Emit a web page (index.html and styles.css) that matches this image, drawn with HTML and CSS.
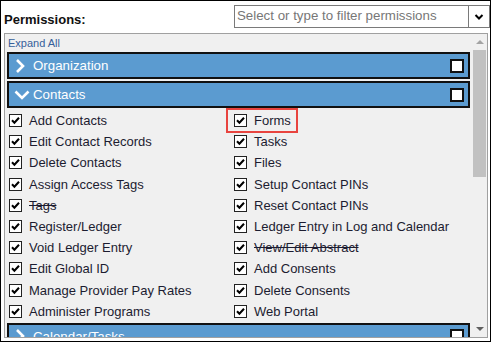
FILE: index.html
```html
<!DOCTYPE html>
<html lang="en">
  <head>
    <meta charset="UTF-8" />
    <title>Permissions</title>
    <link rel="stylesheet" href="styles.css">
  </head>
  <body>
    <div class="frame">
      <div class="top-row">
        <label class="perm-label">Permissions:</label>
        <div class="filter">
          <div class="filter-input">Select or type to filter permissions</div>
          <div class="filter-btn">
            <svg width="10" height="8" viewBox="0 0 10 8"><path d="M1.5 2 L5 5.5 L8.5 2" fill="none" stroke="#000" stroke-width="2"/></svg>
          </div>
        </div>
      </div>

      <div class="panel">
        <div class="perm-list">
          <div class="expand"><a class="expand-link">Expand All</a></div>

          <div class="group-head">
            <svg class="chev" width="16" height="16" viewBox="0 0 16 16"><path d="M3 2 L9 8 L3 14" fill="none" stroke="#fff" stroke-width="2.6"/></svg>
            <span class="group-name">Organization</span>
            <span class="group-box"></span>
          </div>

          <div class="group-head">
            <svg class="chev" width="16" height="16" viewBox="0 0 16 16"><path d="M1.5 4.5 L8 11 L14.5 4.5" fill="none" stroke="#fff" stroke-width="2.6"/></svg>
            <span class="group-name">Contacts</span>
            <span class="group-box"></span>
          </div>

          <div class="items" id="items"></div>

          <div class="group-head last">
            <svg class="chev" width="16" height="16" viewBox="0 0 16 16"><path d="M3 2 L9 8 L3 14" fill="none" stroke="#fff" stroke-width="2.6"/></svg>
            <span class="group-name">Calendar/Tasks</span>
            <span class="group-box"></span>
          </div>
        </div>

        <div class="scrollbar">
          <div class="sb-btn"><span class="arrow-up"></span></div>
          <div class="sb-thumb"></div>
          <div class="sb-fill"></div>
          <div class="sb-btn"><span class="arrow-down"></span></div>
        </div>
      </div>

      <div class="highlight"></div>
    </div>

    <script>
      // permissions in row order: left column, right column
      const perms = [
        ["Add Contacts", "Forms"],
        ["Edit Contact Records", "Tasks"],
        ["Delete Contacts", "Files"],
        ["Assign Access Tags", "Setup Contact PINs"],
        ["~Tags", "Reset Contact PINs"],
        ["Register/Ledger", "Ledger Entry in Log and Calendar"],
        ["Void Ledger Entry", "~View/Edit Abstract"],
        ["Edit Global ID", "Add Consents"],
        ["Manage Provider Pay Rates", "Delete Consents"],
        ["Administer Programs", "Web Portal"],
      ];

      const box =
        '<svg class="cb" width="13" height="13" viewBox="0 0 13 13">' +
        '<rect x="0.5" y="0.5" width="12" height="12" fill="#fff" stroke="#222"/>' +
        '<path d="M3 6.3 L5.4 8.8 L10 3.8" fill="none" stroke="#000" stroke-width="2"/></svg>';

      const list = document.getElementById("items");
      perms.forEach((pair) => {
        pair.forEach((name) => {
          const row = document.createElement("div");
          row.className = "item";
          let cls = "item-name";
          if (name.startsWith("~")) {
            name = name.slice(1);
            cls += " struck";
          }
          row.innerHTML = box + '<span class="' + cls + '">' + name + "</span>";
          list.appendChild(row);
        });
      });
    </script>
  </body>
</html>
```

FILE: styles.css
```css
body {
  margin: 0;
  font-family: "Liberation Sans", Arial, sans-serif;
}

.frame {
  position: relative;
  width: 491px;
  height: 342px;
  box-sizing: border-box;
  border: 1px solid #000;
  background: #fff;
  overflow: hidden;
}

.top-row {
  display: flex;
  height: 32px;
}
.perm-label {
  font-weight: bold;
  font-size: 13px;
  line-height: 16px;
  color: #111;
  padding: 11px 0 0 3px;
}

.filter {
  display: flex;
  margin: 4px 0 0 auto;
  width: 256px;
  height: 23px;
  box-sizing: border-box;
  border: 1px solid #7a7a7a;
  background: #fff;
}
.filter-input {
  flex: 1;
  padding-left: 2px;
  font-size: 13.3px;
  line-height: 20px;
  color: #777;
  white-space: nowrap;
  overflow: hidden;
}
.filter-btn {
  width: 20px;
  border-left: 1px solid #7a7a7a;
  display: flex;
  align-items: center;
  justify-content: center;
}

.panel {
  display: flex;
  margin-left: 3px;
  width: 484px;
  height: 305px;
  box-sizing: border-box;
  border: 1px solid #a0a0a0;
  background: #f0f0f0;
  overflow: hidden;
}
.perm-list {
  flex: 1;
  overflow: hidden;
}

.expand {
  height: 18px;
  box-sizing: border-box;
  padding: 1px 0 0 3px;
  font-size: 11px;
  line-height: 16px;
}
.expand-link {
  color: #36609a;
}

.group-head {
  display: flex;
  align-items: center;
  height: 27px;
  box-sizing: border-box;
  margin: 0 2px 2px 2px;
  border: 2px solid #111;
  background: #5b9bd0;
  color: #fff;
}
.group-head.last {
  margin-top: 0;
}
.chev {
  margin-left: 5px;
  flex-shrink: 0;
}
.group-name {
  flex: 1;
  margin-left: 3px;
  font-size: 13.3px;
}
.group-box {
  width: 14px;
  height: 14px;
  box-sizing: border-box;
  margin-right: 4px;
  border: 2px solid #111;
  background: #fff;
}

.items {
  display: grid;
  grid-template-columns: 225px 225px;
  grid-auto-rows: 21.2px;
  padding-left: 4px;
  margin-bottom: 1px;
}
.item {
  display: flex;
  align-items: center;
  gap: 7px;
  white-space: nowrap;
}
.cb {
  flex-shrink: 0;
}
.item-name {
  font-size: 13px;
  color: #1c1c30;
}
.struck {
  text-decoration: line-through;
}

.scrollbar {
  display: flex;
  flex-direction: column;
  width: 15px;
  background: #f0f0f0;
}
.sb-btn {
  height: 16px;
  display: flex;
  align-items: center;
  justify-content: center;
}
.sb-thumb {
  height: 127px;
  margin: 0 1px;
  background: #c1c1c1;
}
.sb-fill {
  flex: 1;
}
.arrow-up {
  width: 0;
  height: 0;
  border-left: 4px solid transparent;
  border-right: 4px solid transparent;
  border-bottom: 4px solid #a3a3a3;
}
.arrow-down {
  width: 0;
  height: 0;
  border-left: 4px solid transparent;
  border-right: 4px solid transparent;
  border-top: 4px solid #606060;
}

/* annotation around the Forms permission */
.highlight {
  position: absolute;
  left: 225px;
  top: 107px;
  width: 72px;
  height: 25px;
  box-sizing: border-box;
  border: 2px solid #e8443f;
}
```
